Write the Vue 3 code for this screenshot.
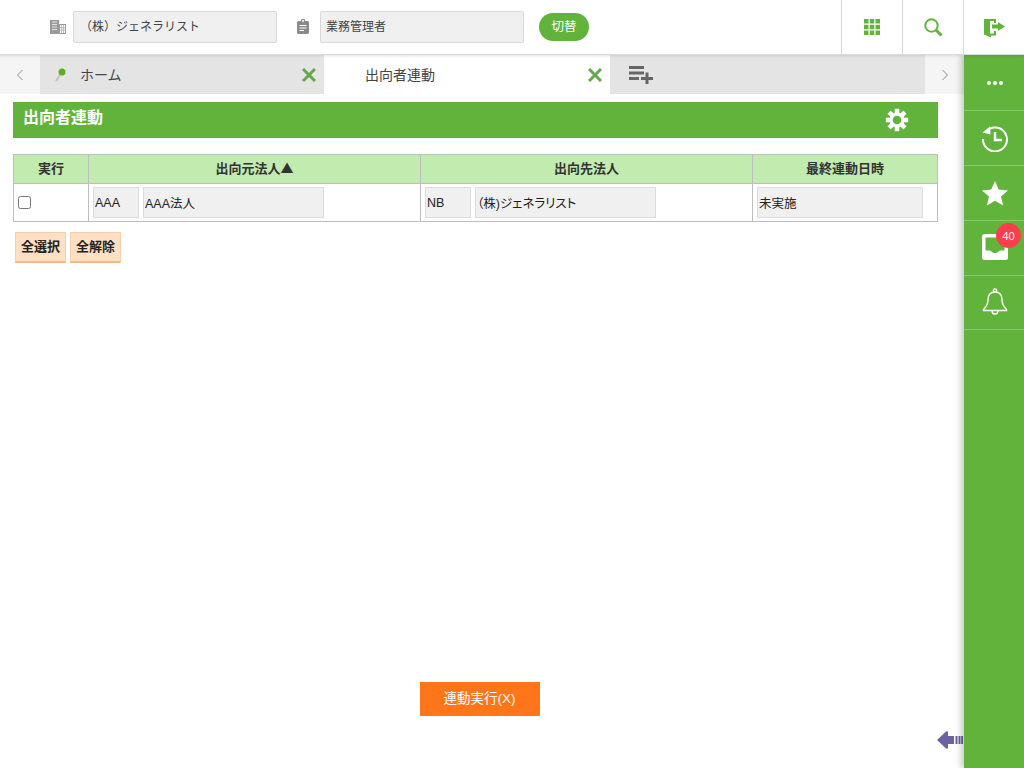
<script setup>
const sideItems = ['more', 'history', 'star', 'inbox', 'bell']
</script>

<template>
  <div class="page">
    <header class="topbar">
      <div class="org">
        <svg class="ic-building" width="16" height="16" viewBox="0 0 16 16">
          <rect x="0" y="1" width="9" height="14" fill="#9a9a9a"/>
          <path d="M2 3h5M2 5.500h5M2 8h5M2 10.500h5" stroke="#e4e4e4" stroke-width="1"/>
          <rect x="9.500" y="5.500" width="6" height="9" fill="#fff" stroke="#9a9a9a"/>
          <path d="M11.500 6v8M13.500 6v8M10 8.500h5M10 11h5" stroke="#b0b0b0" stroke-width=".8"/>
        </svg>
        <div class="field company">（株）ジェネラリスト</div>
        <svg class="ic-clip" width="12" height="15" viewBox="0 0 12 15">
          <path d="M4 2V1.200C4 .5 4.500 0 5 0h2c.5 0 1 .5 1 1.200V2h2.500c.8 0 1.500.7 1.500 1.500V13.500c0 .8-.7 1.500-1.500 1.500h-9C.7 15 0 14.300 0 13.500V3.500C0 2.700.7 2 1.500 2z" fill="#8a8a8a"/>
          <path d="M2.500 6.500h7M2.500 9h7M2.500 11.500h4.500" stroke="#fff" stroke-width="1"/>
          <rect x="5" y="1.200" width="2" height="1.500" fill="#fff"/>
        </svg>
        <div class="field role">業務管理者</div>
        <button class="switch">切替</button>
      </div>
      <div class="top-icons">
        <div class="top-cell">
          <svg width="16" height="16" viewBox="0 0 16 16" fill="#62b33c">
            <rect width="4.500" height="4.500"/><rect x="5.750" width="4.500" height="4.500"/><rect x="11.500" width="4.500" height="4.500"/>
            <rect y="5.750" width="4.500" height="4.500"/><rect x="5.750" y="5.750" width="4.500" height="4.500"/><rect x="11.500" y="5.750" width="4.500" height="4.500"/>
            <rect y="11.500" width="4.500" height="4.500"/><rect x="5.750" y="11.500" width="4.500" height="4.500"/><rect x="11.500" y="11.500" width="4.500" height="4.500"/>
          </svg>
        </div>
        <div class="top-cell">
          <svg width="19" height="19" viewBox="0 0 19 19" fill="none" stroke="#62b33c">
            <circle cx="7.500" cy="7.500" r="6.200" stroke-width="2"/>
            <path d="M12 12l5.500 5.500" stroke-width="3"/>
          </svg>
        </div>
        <div class="top-cell">
          <svg class="ic-exit" width="21" height="19" viewBox="0 0 21 19" fill="#62b33c">
            <path d="M0 0h12v4h-2V2H6v12.500h4V12h2v4.500H7V18.500L0 15.500z"/>
            <path d="M8 5.500h6V3l7 4.500-7 4.500V9.500H8z"/>
          </svg>
        </div>
      </div>
    </header>

    <div class="body">
      <div class="left">
        <nav class="tabs">
          <div class="tab-arrow">
            <svg width="8" height="12" viewBox="0 0 8 12" fill="none" stroke="#8b8b8b" stroke-width="1"><path d="M6.500 1L1.500 6l5 5"/></svg>
          </div>
          <div class="tab home">
            <svg class="pin" width="12" height="15" viewBox="0 0 12 15">
              <path d="M1 14l4-6" stroke="#c2c2c2" stroke-width="2"/>
              <circle cx="7" cy="5" r="3.500" fill="#5fae1e"/>
            </svg>
            <span class="tab-label">ホーム</span>
            <svg class="close" width="14" height="14" viewBox="0 0 14 14" stroke="#64a84c" stroke-width="3"><path d="M1 1l12 12M13 1L1 13"/></svg>
          </div>
          <div class="tab active">
            <span class="tab-label">出向者連動</span>
            <svg class="close" width="14" height="14" viewBox="0 0 14 14" stroke="#64a84c" stroke-width="3"><path d="M1 1l12 12M13 1L1 13"/></svg>
          </div>
          <div class="tab-rest">
            <svg width="24" height="18" viewBox="0 0 24 18" fill="#666">
              <rect y="0" width="15" height="3"/><rect y="5.500" width="15" height="3"/><rect y="11" width="10" height="3"/>
              <rect x="12" y="11" width="12" height="3"/><rect x="16.500" y="6.500" width="3" height="11.500"/>
            </svg>
          </div>
          <div class="tab-arrow">
            <svg width="8" height="12" viewBox="0 0 8 12" fill="none" stroke="#8b8b8b" stroke-width="1"><path d="M1.500 1l5 5-5 5"/></svg>
          </div>
        </nav>

        <main class="content">
          <div class="title-bar">
            <h1>出向者連動</h1>
            <svg class="gear" width="24" height="24" viewBox="0 0 24 24">
              <g fill="#fff">
                <circle cx="12" cy="12" r="7.500"/>
                <rect v-for="a in [0,45,90,135,180,225,270,315]" :key="a" x="9.700" y="0.800" width="4.600" height="6" :transform="`rotate(${a} 12 12)`"/>
              </g>
              <circle cx="12" cy="12" r="4.300" fill="#62b33c"/>
            </svg>
          </div>

          <table class="grid">
            <colgroup>
              <col class="c1"><col class="c2"><col class="c3"><col class="c4">
            </colgroup>
            <thead>
              <tr>
                <th>実行</th>
                <th>出向元法人<span class="sort">▲</span></th>
                <th>出向先法人</th>
                <th>最終連動日時</th>
              </tr>
            </thead>
            <tbody>
              <tr>
                <td class="check-cell"><input type="checkbox" class="check"></td>
                <td>
                  <div class="cell-row">
                    <div class="code">AAA</div>
                    <div class="name">AAA法人</div>
                  </div>
                </td>
                <td>
                  <div class="cell-row">
                    <div class="code">NB</div>
                    <div class="name">（株)ジェネラリスト</div>
                  </div>
                </td>
                <td>
                  <div class="cell-row">
                    <div class="last">未実施</div>
                  </div>
                </td>
              </tr>
            </tbody>
          </table>

          <div class="select-btns">
            <button class="sel">全選択</button>
            <button class="sel">全解除</button>
          </div>

          <div class="footer">
            <button class="run">連動実行(X)</button>
          </div>

          <svg class="collapse" width="26" height="20" viewBox="0 0 26 20" fill="#6a62a3">
            <path d="M0 10L9 1.500h2V6h6v8h-6v4.500H9z"/>
            <rect x="18.500" y="6" width="2" height="8"/>
            <rect x="21.500" y="6" width="2" height="8"/>
            <rect x="24.200" y="6" width="1.800" height="8"/>
          </svg>
        </main>
      </div>

      <aside class="side">
        <div v-for="item in sideItems" :key="item" class="side-item" :class="item">
          <svg v-if="item === 'more'" width="16" height="4" viewBox="0 0 16 4" fill="#fff">
            <circle cx="2" cy="2" r="2"/><circle cx="8" cy="2" r="2"/><circle cx="14" cy="2" r="2"/>
          </svg>
          <svg v-else-if="item === 'history'" width="28" height="28" viewBox="0 0 28 28" fill="none" stroke="#fff" stroke-width="2">
            <path d="M5 7.500A12 12 0 1 1 2 15"/>
            <path d="M1.500 8.500L9 2.500 9.500 10.500z" fill="#fff" stroke="none"/>
            <path d="M14 8v8h7" stroke-width="2.400"/>
          </svg>
          <svg v-else-if="item === 'star'" width="26" height="25" viewBox="0 0 26 25" fill="#fff">
            <path d="M13 0l3.700 8.600 9.300.8-7 6.100 2.100 9.100L13 19.800 4.900 24.600 7 15.500 0 9.400l9.300-.8z"/>
          </svg>
          <svg v-else-if="item === 'inbox'" class="ic-inbox" width="26" height="26" viewBox="0 0 26 26">
            <rect width="26" height="26" rx="2.500" fill="#fff"/>
            <path d="M3.500 3.500h19v13H18c-1 0-1.500 2.500-5 2.500s-4-2.500-5-2.500H3.500z" fill="#62b33c"/>
          </svg>
          <svg v-else class="ic-bell" width="26" height="27" viewBox="0 0 26 27" fill="none" stroke="#fff" stroke-width="1.400">
            <circle cx="13" cy="2.500" r="1.600"/>
            <path d="M13 4c-5 0-7 3.500-7 8 0 5-2 7-4.500 9.500v1h23v-1C22 19 20 17 20 12c0-4.500-2-8-7-8z"/>
            <path d="M10 22.500c0 2.500 1.500 3.500 3 3.500s3-1 3-3.500"/>
          </svg>
          <span v-if="item === 'inbox'" class="badge">40</span>
        </div>
      </aside>
    </div>
  </div>
</template>

<style>
html, body { margin: 0; padding: 0; background: #fff; }
</style>

<style scoped>
* { box-sizing: border-box; }
.page {
  width: 1024px;
  height: 768px;
  display: flex;
  flex-direction: column;
  overflow: hidden;
  font-family: "Liberation Sans", "Noto Sans CJK JP", sans-serif;
  color: #333;
  font-size: 13px;
  position: relative;
}
.topbar {
  height: 55px;
  display: flex;
  justify-content: space-between;
  background: #fff;
  border-bottom: 1px solid #dcdcdc;
  box-shadow: 0 1px 3px rgba(0, 0, 0, .12);
  position: relative;
  z-index: 2;
}
.org {
  display: flex;
  align-items: center;
  padding: 0 0 1px 50px;
}
.ic-building { margin-right: 7px; }
.ic-clip { margin: 0 11px 0 20px; }
.ic-exit { margin-top: 2px; }
.field {
  height: 32px;
  background: #f0f0f0;
  border: 1px solid #d8d8d8;
  border-radius: 2px;
  display: flex;
  align-items: center;
  font-size: 12px;
  color: #444;
  padding-bottom: 2px;
}
.company { width: 204px; padding-left: 6px; }
.role { width: 204px; padding-left: 5px; }
.switch {
  margin-left: 15px;
  width: 50px;
  height: 28px;
  border: 0;
  border-radius: 14px;
  background: #62b33c;
  color: #fff;
  font: inherit;
  font-size: 12.500px;
  padding: 0 0 2px;
}
.top-icons { display: flex; }
.top-cell {
  width: 61px;
  margin-left: 0;
  border-left: 1px solid #d6d6d6;
  display: flex;
  align-items: center;
  justify-content: center;
}

.body { flex: 1; display: flex; min-height: 0; }
.left { flex: 1; display: flex; flex-direction: column; min-width: 0; }
.tabs { height: 39px; display: flex; flex-shrink: 0; background: #f5f5f5; }
.tab-arrow {
  width: 40px;
  display: flex;
  align-items: center;
  justify-content: center;
}
.tabs .tab-arrow:last-child { width: 39px; }
.tab {
  width: 284px;
  display: flex;
  align-items: center;
  background: #e4e4e4;
  position: relative;
  font-size: 14px;
  color: #444;
}
.tab.active { width: 286px; background: #fff; padding-left: 41px; }
.tab-label { padding-bottom: 1px; }
.pin { margin-left: 15px; margin-right: 13px; }
.close { position: absolute; right: 8px; top: 13px; }
.tab-rest {
  flex: 1;
  background: #e4e4e4;
  padding: 11px 0 0 19px;
}
.content {
  flex: 1;
  position: relative;
  display: flex;
  flex-direction: column;
  padding: 8px 26px 52px 13px;
  background: #fff;
}
.title-bar {
  height: 36px;
  background: #62b33c;
  display: flex;
  justify-content: space-between;
  align-items: center;
  padding: 0 29px 0 10px;
  flex-shrink: 0;
}
.title-bar h1 {
  margin: 0 0 8px;
  font-size: 16px;
  font-weight: 700;
  color: #fff;
}
.grid {
  margin-top: 16px;
  width: 924px;
  border-collapse: collapse;
  table-layout: fixed;
}
.c1 { width: 75px; }
.c2 { width: 332px; }
.c3 { width: 332px; }
.c4 { width: 185px; }
.grid th, .grid td { border: 1px solid #bdbdbd; padding: 0; }
.grid th {
  height: 29px;
  background: #c2ebb0;
  font-size: 13px;
  font-weight: 700;
  color: #333;
  text-align: center;
  padding-bottom: 4px;
}
.sort { font-family: "Noto Sans CJK JP", sans-serif; font-weight: 400; }
.grid td { height: 38px; }
.check-cell { padding-left: 4px !important; }
.check {
  width: 13px;
  height: 13px;
  margin: 0;
  display: block;
}
.cell-row { display: flex; gap: 4px; padding-left: 4px; }
.code, .name, .last {
  height: 31px;
  background: #f0f0f0;
  border: 1px solid #dcdcdc;
  display: flex;
  align-items: center;
  padding-left: 1px;
  padding-bottom: 1px;
  font-size: 12.500px;
  color: #222;
}
.name { font-feature-settings: "palt"; }
.code { width: 46px; padding-bottom: 0; }
.name { width: 181px; }
.last { width: 166px; }
.select-btns { display: flex; gap: 4px; margin: 10px 0 0 2px; }
.sel {
  width: 51px;
  height: 31px;
  padding: 0 0 3px;
  background: #ffe0c4;
  border: 1px solid #f5cfa8;
  border-bottom: 2px solid #f2b888;
  font: inherit;
  font-size: 13px;
  font-weight: 700;
  color: #222;
}
.footer {
  margin-top: auto;
  display: flex;
  justify-content: center;
  padding-left: 8px;
}
.run {
  width: 120px;
  height: 34px;
  border: 0;
  padding: 0 0 4px;
  background: #ff761a;
  color: #fff;
  font: inherit;
  font-size: 13.500px;
}
.collapse { position: absolute; right: 1px; bottom: 18px; }

.side {
  width: 60px;
  background: #62b33c;
  box-shadow: -3px 0 6px rgba(0, 0, 0, .22);
  display: flex;
  flex-direction: column;
  position: relative;
  z-index: 1;
  flex-shrink: 0;
}
.side-item {
  height: 55px;
  padding-left: 2px;
  display: flex;
  align-items: center;
  justify-content: center;
  border-bottom: 1px solid #8cc871;
  position: relative;
  flex-shrink: 0;
}
.side-item:first-child { height: 56px; }
.side-item:last-child { height: 54px; }
.ic-inbox { margin-bottom: 2px; }
.ic-bell { margin-bottom: 3px; }
.badge {
  position: absolute;
  right: 3px;
  top: 2px;
  width: 25px;
  height: 25px;
  border-radius: 50%;
  background: #fa3e4c;
  color: #fff;
  font-family: "Open Sans", sans-serif;
  font-size: 11px;
  display: flex;
  align-items: center;
  justify-content: center;
}
</style>
